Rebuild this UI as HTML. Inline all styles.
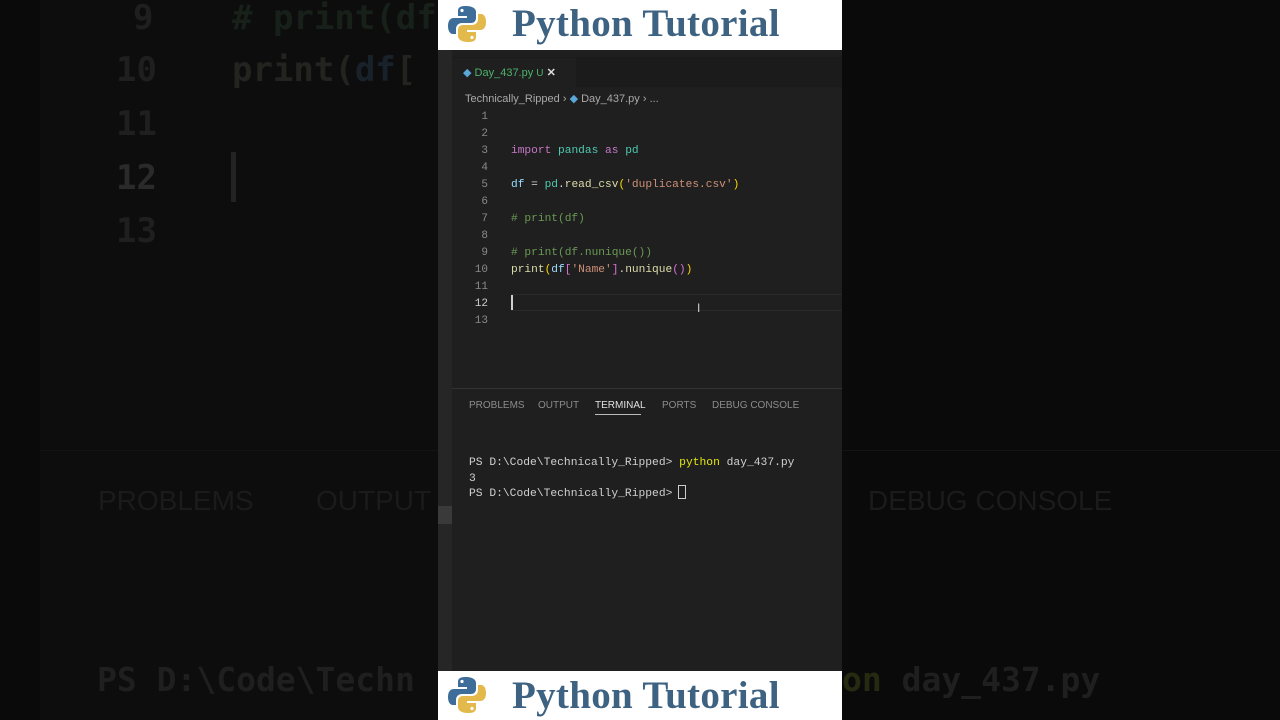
<!DOCTYPE html>
<html><head><meta charset="utf-8"><style>
*{margin:0;padding:0;box-sizing:border-box}
body{width:1280px;height:720px;background:#0a0a0b;position:relative;overflow:hidden;font-family:"Liberation Sans",sans-serif}
.a{position:absolute;white-space:pre}
.mono{font-family:"Liberation Mono","DejaVu Sans Mono",monospace}
.bg{font-family:"DejaVu Sans Mono",monospace;font-weight:bold;font-size:34px;color:#1f1f1f}
.banner{position:absolute;left:438px;width:404px;background:#fff}
.title{position:absolute;left:74px;font-family:"Liberation Serif",serif;font-weight:bold;font-size:39px;color:#3e6282;letter-spacing:0.3px}
.ln{position:absolute;left:452px;width:36px;text-align:right;font-size:11px;color:#8a8a8a}
.code{position:absolute;left:511px;font-size:11.2px;color:#d4d4d4}
</style></head><body>
<div class="a" style="left:40px;top:0;width:400px;height:720px;background:#0d0d0e"></div>
<div class="a" style="left:40px;top:450px;width:1240px;height:1px;background:#141414"></div>
<div class="a bg" style="left:133px;top:-2px">9</div>
<div class="a bg" style="left:116px;top:50px">10</div>
<div class="a bg" style="left:116px;top:104px">11</div>
<div class="a bg" style="left:116px;top:158px;color:#2a2a2a">12</div>
<div class="a bg" style="left:116px;top:211px">13</div>
<div class="a bg" style="left:232px;top:-2px;color:#18201a"># print(df</div>
<div class="a bg" style="left:232px;top:50px;color:#232320">print(<span style="color:#19222b">df</span>[</div>
<div class="a" style="left:231px;top:152px;width:5px;height:50px;background:#232323"></div>
<div class="a" style="left:98px;top:485px;font-size:28px;color:#1b1b1b">PROBLEMS</div>
<div class="a" style="left:316px;top:485px;font-size:28px;color:#1b1b1b">OUTPUT</div>
<div class="a" style="left:868px;top:485px;font-size:28px;color:#1b1b1b">DEBUG CONSOLE</div>
<div class="a bg" style="left:97px;top:660px;font-size:33px">PS D:\Code\Techn</div>
<div class="a bg" style="left:842px;top:660px;font-size:33px"><span style="color:#262a10">on</span> day_437.py</div>

<div class="a" style="left:438px;top:50px;width:404px;height:622px;background:#1f1f1f"></div>
<div class="a" style="left:438px;top:50px;width:14px;height:622px;background:#262626"></div>
<div class="a" style="left:438px;top:506px;width:14px;height:18px;background:#3a3a3a"></div>
<div class="a" style="left:452px;top:57px;width:390px;height:30px;background:#1b1b1b"></div>
<div class="a" style="left:452px;top:58px;width:124px;height:29px;background:#1f1f1f"></div>
<div class="a" style="left:463px;top:66px;font-size:11px;color:#4db36b"><span style="color:#5aa7d8">◆</span> Day_437.py <span style="font-size:10px">U</span> <span style="color:#ddd;font-weight:bold">✕</span></div>
<div class="a" style="left:465px;top:92px;font-size:11px;color:#a9a9a9">Technically_Ripped › <span style="color:#5aa7d8">◆</span> Day_437.py › ...</div>
<div class="ln mono a" style="top:111px">1</div>
<div class="ln mono a" style="top:128px">2</div>
<div class="ln mono a" style="top:145px">3</div>
<div class="ln mono a" style="top:162px">4</div>
<div class="ln mono a" style="top:179px">5</div>
<div class="ln mono a" style="top:196px">6</div>
<div class="ln mono a" style="top:213px">7</div>
<div class="ln mono a" style="top:230px">8</div>
<div class="ln mono a" style="top:247px">9</div>
<div class="ln mono a" style="top:264px">10</div>
<div class="ln mono a" style="top:281px">11</div>
<div class="ln mono a" style="top:298px;color:#d0d0d0">12</div>
<div class="ln mono a" style="top:315px">13</div>
<div class="code mono a" style="top:145px"><span style="color:#c678c8">import</span> <span style="color:#4ec9b0">pandas</span> <span style="color:#c678c8">as</span> <span style="color:#4ec9b0">pd</span></div>
<div class="code mono a" style="top:179px"><span style="color:#9cdcfe">df</span> = <span style="color:#4ec9b0">pd</span>.<span style="color:#dcdcaa">read_csv</span><span style="color:#ffd700">(</span><span style="color:#ce9178">'duplicates.csv'</span><span style="color:#ffd700">)</span></div>
<div class="code mono a" style="top:213px;color:#6a9955"># print(df)</div>
<div class="code mono a" style="top:247px;color:#6a9955"># print(df.nunique())</div>
<div class="code mono a" style="top:264px"><span style="color:#dcdcaa">print</span><span style="color:#ffd700">(</span><span style="color:#9cdcfe">df</span><span style="color:#da70d6">[</span><span style="color:#ce9178">'Name'</span><span style="color:#da70d6">]</span>.<span style="color:#dcdcaa">nunique</span><span style="color:#da70d6">()</span><span style="color:#ffd700">)</span></div>
<div class="a" style="left:511px;top:294px;width:331px;height:17px;border-top:1px solid #2a2a2a;border-bottom:1px solid #2a2a2a"></div>
<div class="a" style="left:511px;top:295px;width:2px;height:15px;background:#cfcfcf"></div>
<div class="a" style="left:697px;top:301px;font-size:12px;color:#ccc">I</div>
<div class="a" style="left:452px;top:388px;width:390px;height:1px;background:#333"></div>
<div class="a" style="left:469px;top:400px;font-size:10px;color:#8c8c8c">PROBLEMS</div>
<div class="a" style="left:538px;top:400px;font-size:10px;color:#8c8c8c">OUTPUT</div>
<div class="a" style="left:595px;top:400px;font-size:10px;color:#e0e0e0">TERMINAL</div>
<div class="a" style="left:595px;top:414px;width:46px;height:1px;background:#bbb"></div>
<div class="a" style="left:662px;top:400px;font-size:10px;color:#8c8c8c">PORTS</div>
<div class="a" style="left:712px;top:400px;font-size:10px;color:#8c8c8c">DEBUG CONSOLE</div>
<div class="a mono" style="left:469px;top:456px;font-size:11.3px;line-height:15.5px;color:#d0d0d0">PS D:\Code\Technically_Ripped&gt; <span style="color:#e5e510">python</span> day_437.py
3
PS D:\Code\Technically_Ripped&gt;</div>
<div class="a" style="left:678px;top:485px;width:8px;height:14px;border:1px solid #ccc"></div>

<div class="banner" style="top:0;height:50px">
<svg style="position:absolute;left:10px;top:5px" width="38" height="38" viewBox="0 0 38 38"><path d="M18 1c-8 0-8 3-8 6v4h9v2H6c-4 0-6 3-6 8s2 8 5 8h3v-5c0-4 3-6 6-6h9c3 0 5-2 5-5V7c0-3-3-6-10-6z" fill="#3d6d98"/><circle cx="14" cy="5.5" r="1.6" fill="#fff"/><path d="M20 37c8 0 8-3 8-6v-4h-9v-2h13c4 0 6-3 6-8s-2-8-5-8h-3v5c0 4-3 6-6 6h-9c-3 0-5 2-5 5v6c0 3 3 6 10 6z" fill="#e2b94a"/><circle cx="24" cy="32.5" r="1.6" fill="#fff"/></svg>
<div class="title" style="top:1px">Python Tutorial</div></div>
<div class="banner" style="top:671px;height:49px">
<svg style="position:absolute;left:10px;top:5px" width="38" height="38" viewBox="0 0 38 38"><path d="M18 1c-8 0-8 3-8 6v4h9v2H6c-4 0-6 3-6 8s2 8 5 8h3v-5c0-4 3-6 6-6h9c3 0 5-2 5-5V7c0-3-3-6-10-6z" fill="#3d6d98"/><circle cx="14" cy="5.5" r="1.6" fill="#fff"/><path d="M20 37c8 0 8-3 8-6v-4h-9v-2h13c4 0 6-3 6-8s-2-8-5-8h-3v5c0 4-3 6-6 6h-9c-3 0-5 2-5 5v6c0 3 3 6 10 6z" fill="#e2b94a"/><circle cx="24" cy="32.5" r="1.6" fill="#fff"/></svg>
<div class="title" style="top:2px">Python Tutorial</div></div>
</body></html>
